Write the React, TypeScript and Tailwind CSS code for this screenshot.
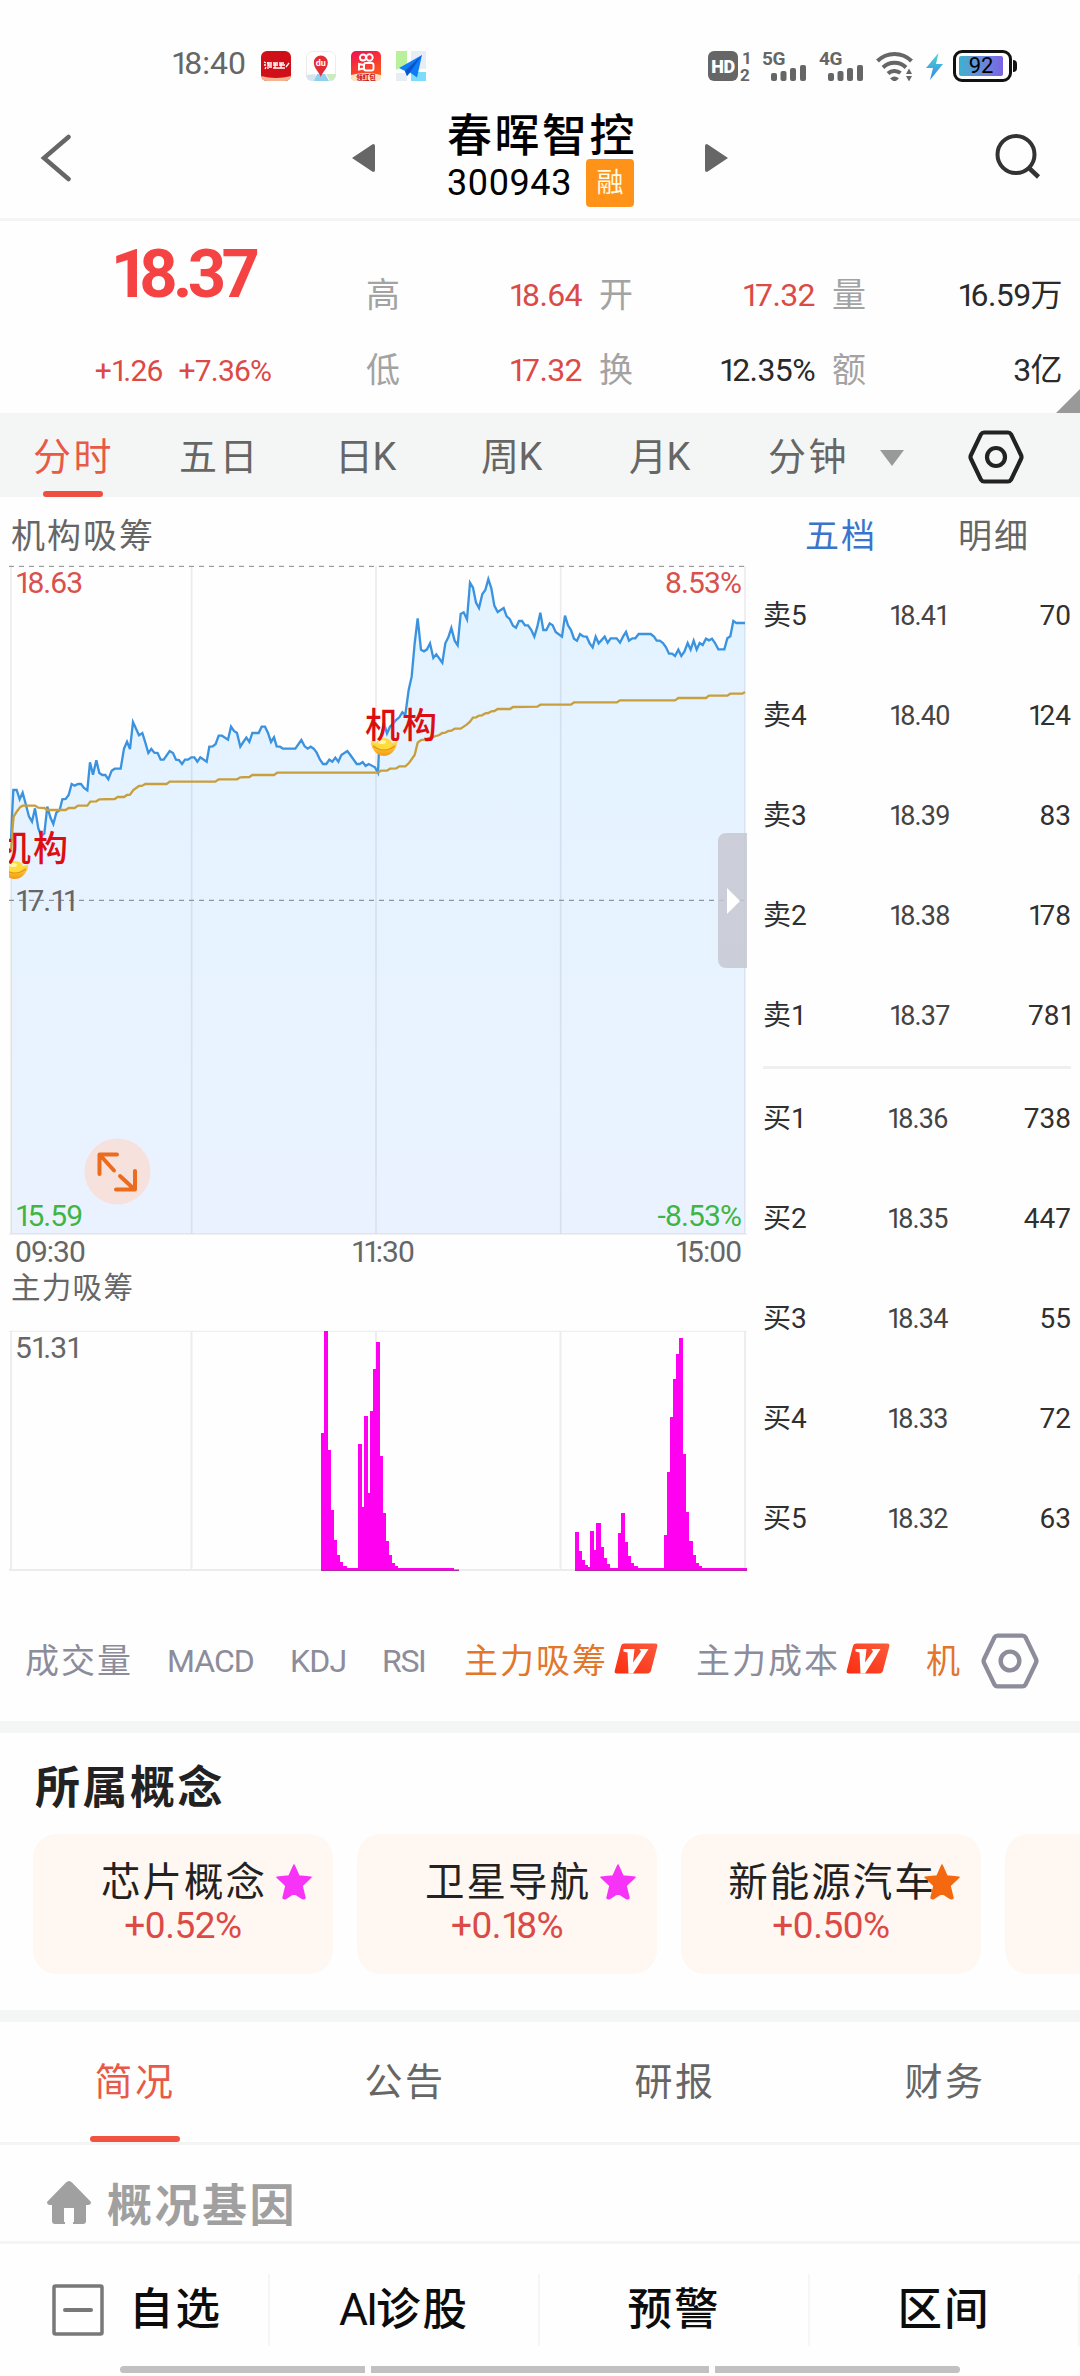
import React from 'react'

/* Digits are set with a narrow "1". */
function Num({ children }: { children: string }) {
  return (
    <>
      {children.split('').map((c, i) =>
        c === '1' ? (
          <span key={i} className="tracking-[-0.15em]">
            1
          </span>
        ) : (
          <React.Fragment key={i}>{c}</React.Fragment>
        ),
      )}
    </>
  )
}

const PRICE =
  '33,870 36,800 40,720 50,720 59,748 68,728 78,765 87,800 96,815 105,775 115,835 124,858 133,850 142,770 151,802 160,822 169,788 179,780 187,748 197,747 206,735 215,702 224,707 234,702 243,702 252,714 262,721 270,637 279,674 289,631 298,669 307,675 316,675 325,688 335,662 344,656 362,656 372,596 381,575 390,597 399,516 417,556 427,549 436,578 445,609 454,597 463,608 473,609 482,629 491,629 509,603 519,609 528,629 537,630 546,642 555,629 564,629 574,622 583,622 592,635 601,622 620,635 628,590 638,589 647,582 656,557 666,557 684,569 693,530 702,543 711,549 721,590 730,576 739,563 748,576 757,549 776,549 785,530 795,530 804,549 813,576 822,562 830,589 840,590 849,596 886,596 904,570 914,589 923,596 932,590 941,596 950,608 960,629 969,642 979,642 988,629 997,635 1006,623 1015,635 1024,615 1042,603 1051,615 1070,642 1079,642 1088,636 1097,648 1106,642 1125,652 1134,668 1137,600 1143,560 1152,520 1161,550 1170,530 1180,520 1188,510 1198,502 1207,487 1216,494 1226,420 1235,380 1244,280 1253,205 1263,299 1272,304 1281,298 1290,280 1300,324 1309,313 1327,338 1336,280 1345,262 1354,234 1364,272 1373,286 1382,192 1391,187 1401,208 1410,98 1419,113 1428,158 1437,174 1447,132 1456,120 1465,87 1474,115 1483,167 1493,186 1511,174 1520,199 1529,207 1539,227 1548,233 1557,213 1566,213 1575,226 1584,226 1594,240 1603,260 1612,230 1621,188 1630,240 1639,240 1649,220 1658,226 1667,246 1686,260 1695,197 1704,226 1713,240 1722,266 1731,272 1740,252 1750,259 1760,260 1769,280 1778,292 1787,260 1796,280 1814,260 1823,278 1832,265 1850,265 1860,278 1869,260 1878,246 1887,272 1897,265 1906,265 1916,252 1952,252 1962,260 1970,272 1979,272 1989,279 1998,292 2007,311 2016,311 2025,318 2035,299 2044,318 2053,305 2063,279 2072,299 2081,272 2090,299 2099,279 2108,285 2118,266 2127,271 2136,266 2145,279 2155,298 2173,298 2182,265 2191,259 2200,213 2209,219 2235,219'

const AVERAGE =
  '33,905 38,830 41,800 50,785 60,772 68,767 105,767 115,773 133,774 142,780 197,780 206,774 224,774 234,767 262,767 271,755 289,754 298,748 344,747 353,741 372,741 381,735 390,734 400,720 417,708 427,707 436,702 500,702 509,695 646,695 656,688 711,688 721,682 748,681 757,675 822,675 832,668 1134,668 1143,662 1161,662 1170,656 1189,655 1198,649 1216,649 1226,640 1244,615 1253,578 1263,570 1272,569 1318,555 1327,549 1336,548 1345,543 1354,542 1364,536 1382,536 1400,524 1410,515 1419,503 1428,502 1437,497 1446,496 1456,490 1465,489 1474,484 1483,483 1493,477 1530,477 1539,471 1612,470 1621,464 1713,464 1722,457 1851,457 1860,451 2025,451 2035,444 2118,444 2127,437 2182,437 2191,431 2227,431 2235,426'

/* [left, right, top] of every volume bar, in pixels */
const BARS: [number, number, number][] = [
  [321, 324, 1432.7], [324, 328, 1330.7], [328, 331, 1450], [331, 334, 1510], [334, 337, 1540],
  [337, 340, 1555], [340, 343, 1562.3], [343, 346.5, 1566], [346.5, 357.5, 1568],
  [357.5, 362, 1444], [362, 363.7, 1506.7], [363.7, 368, 1416], [368, 369.8, 1493],
  [369.8, 373, 1411.3], [373, 375.8, 1369.3], [375.8, 380, 1341.7], [380, 383, 1455.7],
  [383, 386, 1512.7], [386, 389, 1541], [389, 392.2, 1555.3], [392.2, 395.3, 1562.7],
  [395.3, 398.4, 1566], [398.4, 454, 1568.3], [454, 459, 1570],
  [574.8, 579, 1532], [579, 582, 1550.7], [582, 585, 1560], [585, 588, 1565], [588, 590, 1567],
  [590, 594.4, 1531], [594.4, 596, 1550], [596, 600.6, 1523], [600.6, 603.7, 1546.7],
  [603.7, 606.8, 1558], [606.8, 609.9, 1563.7], [609.9, 617.5, 1567.5], [617.5, 621, 1532.7],
  [621, 625, 1513], [625, 628, 1541.7], [628, 631, 1555.7], [631, 634.3, 1562.7],
  [634.3, 637.5, 1566], [637.5, 663.6, 1568.3], [663.6, 666.7, 1534.7], [666.7, 669.8, 1471.7],
  [669.8, 673, 1417], [673, 676, 1378.7], [676, 678.8, 1353.7], [678.8, 683.2, 1338],
  [683.2, 686.3, 1454], [686.3, 689.4, 1512], [689.4, 692.5, 1540.7], [692.5, 695.6, 1555],
  [695.6, 698.7, 1562.7], [698.7, 701.8, 1566], [701.8, 747, 1568.3],
]

function Signal({ label }: { label: string }) {
  return (
    <div className="relative h-[30px] w-[44px] text-[#666]">
      <span className="absolute left-0 top-[-1px] text-[19px] font-bold leading-[17px] tracking-[-0.5px]">{label}</span>
      <svg className="absolute left-[9px] top-[14px]" width="35" height="16" fill="#666">
        <rect x="0" y="8" width="6" height="8" rx="2" />
        <rect x="9.5" y="6" width="6" height="10" rx="2" />
        <rect x="19" y="3" width="6" height="13" rx="2" />
        <rect x="29" y="0" width="6" height="16" rx="2" />
      </svg>
    </div>
  )
}

function StatusBar() {
  return (
    <div className="flex h-[100px] items-start pl-[171px] pt-[51px] text-[#666]">
      <div className="w-[90px] text-[32px] leading-[24px]">
        <Num>18:40</Num>
      </div>
      <svg width="30" height="30" viewBox="0 0 30 30">
        <defs>
          <clipPath id="r1"><rect width="30" height="30" rx="6" /></clipPath>
        </defs>
        <g clipPath="url(#r1)">
          <rect width="30" height="30" fill="#cf1018" />
          <path d="M0 25q15 4 30 0v5H0z" fill="#f3b48f" />
          <path d="M3 11l2 1M3 14h2M4 18l1-2M7 11v7M6 12h5M7 14h4M8 16h3M12 12h5M12 14h5M12 17h6M14 12v5M18 12h5M18 14h6M18 17h6M20 12v5M25 16l3-4" stroke="#fff" strokeWidth="1.3" fill="none" />
        </g>
      </svg>
      <svg className="ml-[15px]" width="30" height="30" viewBox="0 0 30 30">
        <defs>
          <clipPath id="r2"><rect width="30" height="30" rx="6" /></clipPath>
        </defs>
        <rect x=".5" y=".5" width="29" height="29" rx="6" fill="#fff" stroke="#ececec" />
        <g clipPath="url(#r2)">
          <path d="M0 24l9-1 3 7H0z" fill="#d3e6ee" />
          <path d="M11 23h8l4 7H8z" fill="#8fd0ee" />
          <path d="M20 23h10v7h-6z" fill="#cdebc3" />
        </g>
        <path d="M14.8 26c-.8-4-7-8.500-7-14.500a7 7 0 0114 0c0 6-6.200 10.500-7 14.500z" fill="#e32b35" />
        <text x="14.800" y="15" fontSize="9" fontWeight="700" fill="#fff" textAnchor="middle">du</text>
      </svg>
      <svg className="ml-[15px]" width="30" height="30" viewBox="0 0 30 30">
        <defs>
          <linearGradient id="ks" x1="0" y1="0" x2=".4" y2="1">
            <stop offset="0" stopColor="#f00f52" />
            <stop offset="1" stopColor="#fd5a1c" />
          </linearGradient>
        </defs>
        <rect width="30" height="30" rx="5" fill="url(#ks)" />
        <path d="M0 24q15-4 30 0v2q0 4-4 4H4q-4 0-4-4z" fill="#fbe6c4" />
        <g fill="none" stroke="#fff" strokeWidth="1.900">
          <circle cx="12" cy="6.500" r="3" />
          <circle cx="18.500" cy="6.500" r="3.200" />
          <rect x="13" y="12" width="9.500" height="7.500" rx="2" />
          <path d="M12.500 14L8 13v5.500l4.500-1" />
        </g>
        <text x="15" y="29" fontSize="6.500" fontWeight="900" fill="#d0201c" textAnchor="middle" className="font-['Noto_Sans_CJK_SC',sans-serif]">领红包</text>
      </svg>
      <svg className="ml-[15px]" width="30" height="30" viewBox="0 0 30 30">
        <rect width="30" height="30" fill="#fff" />
        <path d="M0 0h11v13L0 19z" fill="#b9f09b" />
        <path d="M15 0h15v18H15zM0 22h11v8H0z" fill="#e6edf3" />
        <path d="M15 21h15v9H15z" fill="#7edcfb" />
        <path d="M26 4L3 17l6 3 2 5 3-3.500 7 5z" fill="#0f7df8" />
        <path d="M26 4L9 20l2 5 3-3.500z" fill="#0a55c9" />
      </svg>
      <div className="ml-[282px] flex items-start">
        <div className="flex h-[30px] w-[30px] items-center justify-center rounded-[6px] bg-[#666] text-[18px] font-black tracking-[-0.5px] text-white">HD</div>
        <div className="ml-[2px] flex w-[22px] flex-col text-[17px] font-bold leading-[16px]">
          <span className="-mt-[1px] pl-[2px]">1</span>
          <span className="mt-[1px]">2</span>
        </div>
        <Signal label="5G" />
        <div className="w-[13px]" />
        <Signal label="4G" />
        <svg className="ml-[13px]" width="37" height="30" viewBox="0 0 37 30">
          <g fill="none" stroke="#666" strokeWidth="4">
            <path d="M1.500 10a24 24 0 0134 0" />
            <path d="M7 16.500a16.500 16.500 0 0123 0" />
            <path d="M12 22.500a9.500 9.500 0 0112.500-.5" />
          </g>
          <path d="M14 27.500q4.500-4 9 0L18.500 31z" fill="#666" />
          <path d="M30 23l3-5.500 3 5.500zM30 25h6l-3 5.500z" fill="#666" />
        </svg>
        <svg className="ml-[13px] mt-[2px]" width="17" height="27" viewBox="0 0 17 27">
          <defs>
            <linearGradient id="bolt" x1="0" y1="0" x2="0" y2="1">
              <stop offset="0" stopColor="#55d6cf" />
              <stop offset="1" stopColor="#2f86ea" />
            </linearGradient>
          </defs>
          <path d="M12.500 0L0 15h7L4 27l13-16H10z" fill="url(#bolt)" />
        </svg>
        <div className="-mt-[1px] ml-[10px] flex items-center">
          <div className="h-[32px] w-[59px] rounded-[9px] border-[3px] border-[#111] p-[3px]">
            <div className="flex h-[20px] w-[44px] items-center justify-center rounded-[2px] bg-gradient-to-r from-[#3bb0cd] to-[#7a62e3] text-[22px] leading-none text-black">92</div>
          </div>
          <div className="ml-px h-[12px] w-[4px] rounded-r-[4px] bg-[#111]" />
        </div>
      </div>
    </div>
  )
}

function Header() {
  return (
    <div className="flex h-[118px] items-start">
      <svg className="ml-[40px] mt-[34px]" width="32" height="48" fill="none" stroke="#666" strokeWidth="4.500" strokeLinecap="round">
        <path d="M28.500 3L4 24l24.500 21" />
      </svg>
      <svg className="ml-[280px] mt-[43px]" width="23" height="30">
        <path d="M0 15L21 1q2 0 2 2v24q0 2-2 2z" fill="#666" />
      </svg>
      <div className="ml-[72px] flex w-[200px] flex-col">
        <div className="mt-[13px] h-[46px] whitespace-nowrap text-[45px] font-medium leading-[47px] tracking-[2.5px] text-black">春晖智控</div>
        <div className="flex items-center text-black">
          <span className="w-[139px] text-[36px] leading-[44px] tracking-[0.6px]">300943</span>
          <span className="h-[48px] w-[48px] rounded-[4px] bg-[#ff931a] text-center text-[27px] leading-[48px] text-[#fffbe6]">融</span>
        </div>
      </div>
      <svg className="ml-[58px] mt-[43px]" width="23" height="30">
        <path d="M23 15L2 1Q0 1 0 3v24q0 2 2 2z" fill="#666" />
      </svg>
      <svg className="ml-[265px] mt-[31px]" width="50" height="50" fill="none" stroke="#333" strokeWidth="4">
        <circle cx="23" cy="23.500" r="18.500" />
        <path d="M36 37l9.500 9" strokeWidth="4.500" />
      </svg>
    </div>
  )
}

const STATS = [
  [['高', '18.64', 1], ['开', '17.32', 1], ['量', '16.59万', 0]],
  [['低', '17.32', 1], ['换', '12.35%', 0], ['额', '3亿', 0]],
] as const

function Quote() {
  return (
    <div className="relative flex h-[192px]">
      <div className="flex w-[366px] flex-col items-center">
        <div className="mt-[17px] h-[72px] text-[67px] font-bold leading-[72px] tracking-[-0.07em] text-[#f54343]">
          <Num>18.37</Num>
        </div>
        <div className="mt-[46px] flex gap-[16px] text-[30px] leading-[30px] tracking-[-0.8px] text-[#dc4a46]">
          <span><Num>+1.26</Num></span>
          <span><Num>+7.36%</Num></span>
        </div>
      </div>
      <div className="flex flex-1 flex-col pt-[53px]">
        {STATS.map((row, r) => (
          <div key={r} className="grid h-[75px] shrink-0 grid-cols-[233px_233px_248px] items-start leading-[42px]">
            {row.map(([label, value, up], i) => (
              <div key={label} className={i === 2 ? 'flex justify-between pr-[18px]' : 'flex justify-between pr-[17px]'}>
                <span className="text-[34px] text-[#a3a3a3]">{label}</span>
                <span className={up ? 'text-[32px] tracking-[-0.6px] text-[#dc4a46]' : 'text-[32px] tracking-[-0.6px] text-[#2a2a2a]'}>
                  <Num>{value}</Num>
                </span>
              </div>
            ))}
          </div>
        ))}
      </div>
      <svg className="absolute bottom-0 right-0" width="24" height="24">
        <path d="M24 0v24H0z" fill="#999" />
      </svg>
    </div>
  )
}

function Hex({ color, size }: { color: string; size: number }) {
  return (
    <svg width={size} height={size} viewBox="0 0 56 56" fill="none" stroke={color} strokeWidth="4.200" strokeLinejoin="round">
      <path d="M16 3.500h24q2 0 3 1.700L53 26q1 2 0 4L43 50.800q-1 1.700-3 1.700H16q-2 0-3-1.700L3 30q-1-2 0-4L13 5.200q1-1.700 3-1.700z" />
      <circle cx="28" cy="28" r="9" />
    </svg>
  )
}

function PeriodTabs() {
  return (
    <div className="flex h-[84px] items-start bg-[#f4f6f6] text-[38px] leading-[88px] tracking-[2.500px] text-[#666]">
      <div className="relative h-[84px] w-[147px] pl-[33px] text-[#e85a48]">
        分时
        <div className="absolute bottom-0 left-[43px] h-[6px] w-[60px] rounded-[3px] bg-[#ee4f40]" />
      </div>
      <div className="w-[155px] pl-[32px]">五日</div>
      <div className="w-[148px] pl-[33px]">日<span className="-ml-[3px]">K</span></div>
      <div className="w-[148px] pl-[31px]">周<span className="-ml-[3px]">K</span></div>
      <div className="w-[140px] pl-[31px]">月<span className="-ml-[3px]">K</span></div>
      <div className="w-[142px] pl-[30px]">分钟</div>
      <svg className="mt-[37px]" width="24" height="16">
        <path d="M0 0h24L12 16z" fill="#999" />
      </svg>
      <div className="ml-[64px] mt-[16px]">
        <Hex color="#222" size={56} />
      </div>
    </div>
  )
}

function Ingot() {
  return (
    <svg width="28" height="20" viewBox="0 0 28 20">
      <defs>
        <linearGradient id="gold" x1="0" y1="0" x2="0" y2="1">
          <stop offset="0" stopColor="#ffe35a" />
          <stop offset="1" stopColor="#f39a12" />
        </linearGradient>
      </defs>
      <path d="M1 4q-1 3 2 8 4 7 11 7t11-7q3-5 2-8-5 3-13 3T1 4z" fill="url(#gold)" />
      <ellipse cx="14" cy="7" rx="8" ry="6" fill="#ffdc3c" />
      <path d="M3 9q11 8 22 0" stroke="#e8930c" strokeWidth="1.200" fill="none" />
      <ellipse cx="12" cy="5" rx="4" ry="2" fill="#fff4a8" />
    </svg>
  )
}

function Marker() {
  return (
    <div className="relative h-[52px] w-[74px]">
      <div className="absolute left-[5px] top-[29px]"><Ingot /></div>
      <div className="absolute left-0 top-[1px] whitespace-nowrap text-[35px] font-medium leading-[36px] tracking-[2px] text-[#dd0e12]">机构</div>
    </div>
  )
}

/* Chart drawings use three units per pixel; the box starts at (9, 565). */
function MainChart() {
  return (
    <div className="relative h-[671px] w-[738px] overflow-hidden text-[30px] leading-[30px] tracking-[-0.9px]">
      <svg className="block" width="738" height="671" viewBox="27 45 2214 2013" fill="none">
        <defs>
          <linearGradient id="area" x1="0" y1="87" x2="0" y2="2052" gradientUnits="userSpaceOnUse">
            <stop offset="0" stopColor="#e3f3ff" />
            <stop offset="1" stopColor="#ebf2ff" />
          </linearGradient>
        </defs>
        <polygon points={`33,2052 ${PRICE} 2235,2052`} fill="url(#area)" />
        <g stroke="#000" strokeOpacity=".075" strokeWidth="5">
          <path d="M33 49V2052M575 49V2052M1128 49V2052M1682 49V2052M2235 49V2052M27 2052H2241" />
        </g>
        <path d="M27 49H2241" stroke="#888" strokeWidth="3" strokeDasharray="15 15" />
        <path d="M27 1051H2241" stroke="#8d96a0" strokeWidth="4" strokeDasharray="15 15" />
        <polyline points={PRICE} stroke="#3b93e0" strokeWidth="7" />
        <polyline points={AVERAGE} stroke="#c79f3c" strokeWidth="7" />
      </svg>
      <div className="absolute left-[356px] top-[143px]"><Marker /></div>
      <div className="absolute left-[-13px] top-[266px]"><Marker /></div>
      <div className="absolute left-[6px] top-[3px] text-[#d9504c]"><Num>18.63</Num></div>
      <div className="absolute right-[6px] top-[3px] text-[#d9504c]"><Num>8.53%</Num></div>
      <div className="absolute left-[6px] top-[321px] text-[#666]"><Num>17.11</Num></div>
      <div className="absolute bottom-[5px] left-[6px] text-[#3fb544]"><Num>15.59</Num></div>
      <div className="absolute bottom-[5px] right-[6px] text-[#3fb544]"><Num>-8.53%</Num></div>
      <svg className="absolute left-[75px] top-[573px]" width="67" height="67" fill="none" stroke="#ec6c1f" strokeWidth="4" strokeLinecap="round" strokeLinejoin="round">
        <circle cx="33.500" cy="33.500" r="33" fill="#f7e1dd" stroke="none" />
        <path d="M33 16.500H15.500V36M16 17l14 15.500M51 33v18.500H32M50 51L36 38" />
      </svg>
      <div className="absolute right-0 top-[268px] flex h-[135px] w-[29px] items-center rounded-l-[8px] bg-[#c6c8d1]/85 pl-[9px]">
        <svg width="13" height="26"><path d="M0 0l13 13L0 26z" fill="#fff" /></svg>
      </div>
    </div>
  )
}

function SubChart() {
  return (
    <div className="relative mt-[21px] h-[244px] w-[738px] text-[30px] leading-[30px] tracking-[-0.9px] text-[#666]">
      <svg className="block" width="738" height="244" viewBox="9 1329 738 244" fill="none">
        <path d="M11 1331V1570M191.500 1331V1570M376 1331V1570M560.500 1331V1570M745 1331V1570M9 1570H747" stroke="#ececec" strokeWidth="1.800" />
        <path d="M9 1331.300H747" stroke="#ececec" />
        <g shapeRendering="crispEdges">
          {BARS.map(([l, r, t], i) => (
            <rect key={i} x={l} y={t} width={r - l} height={1571 - t} fill="#ff00f0" />
          ))}
        </g>
        <path d="M321 1570.300H459M575 1570.300H747" stroke="#b02aa4" strokeWidth="1.600" />
      </svg>
      <div className="absolute left-[6px] top-[4px]"><Num>51.31</Num></div>
    </div>
  )
}

const SELL = [['卖5', '18.41', '70'], ['卖4', '18.40', '124'], ['卖3', '18.39', '83'], ['卖2', '18.38', '178'], ['卖1', '18.37', '781']]
const BUY = [['买1', '18.36', '738'], ['买2', '18.35', '447'], ['买3', '18.34', '55'], ['买4', '18.33', '72'], ['买5', '18.32', '63']]

function Level({ row, shift }: { row: string[]; shift: string }) {
  return (
    <div className="grid h-[100px] grid-cols-[124px_100px_1fr] items-center text-[28px] leading-none text-[#303030]">
      <span><Num>{row[0]}</Num></span>
      <span className={shift}><Num>{row[1]}</Num></span>
      <span className="text-right"><Num>{row[2]}</Num></span>
    </div>
  )
}

function OrderBook() {
  return (
    <div className="ml-[16px] flex w-[308px] flex-col">
      <div className="flex h-[69px] pl-[42px] text-[34px] leading-[78px] tracking-[2px] text-[#666]">
        <span className="w-[153px] text-[#3a74cc]">五档</span>
        <span>明细</span>
      </div>
      {SELL.map((r) => <Level key={r[0]} row={r} shift="text-[27px] tracking-[-0.8px] text-[#444] pl-[2px]" />)}
      <div className="h-[3px] bg-[#efefef]" />
      {BUY.map((r) => <Level key={r[0]} row={r} shift="text-[27px] tracking-[-0.8px] text-[#444]" />)}
    </div>
  )
}

function VBadge() {
  return (
    <svg className="ml-[6px] mt-[2px]" width="44" height="31" viewBox="0 0 44 31">
      <defs>
        <linearGradient id="vb" x1="0" y1="1" x2="1" y2="0">
          <stop offset="0" stopColor="#fb2d10" />
          <stop offset="1" stopColor="#fb5a3c" />
        </linearGradient>
      </defs>
      <path d="M10 .5h31q3 0 2.300 3L37 27.500q-.8 3-4 3H3q-3 0-2.200-3L7 3Q7.500.5 10 .5z" fill="url(#vb)" />
      <path d="M9.500 6H20.500L19 19.500 27 8.500 25.500 6H34.500L19 30.500H14.500L13.500 9.500 9.500 8.500z" fill="#fff" />
    </svg>
  )
}

function Indicators() {
  return (
    <div className="flex h-[120px] items-center pl-[25px] text-[34px] leading-[40px] text-[#8c8c9a]">
      <div className="w-[142px] tracking-[2px]">成交量</div>
      <div className="w-[123px] text-[32px] tracking-[-1px]">MACD</div>
      <div className="w-[92px] text-[32px] tracking-[-0.800px]">KDJ</div>
      <div className="w-[82px] text-[32px] tracking-[-1.300px]">RSI</div>
      <div className="flex w-[232px] tracking-[2px] text-[#e2762b]">主力吸筹<VBadge /></div>
      <div className="flex w-[230px] tracking-[2px]">主力成本<VBadge /></div>
      <div className="w-[55px] text-[#e2762b]">机</div>
      <Hex color="#8c8c9a" size={58} />
    </div>
  )
}

const CONCEPTS = [
  ['芯片概念', '+0.52%', '#f733f7'],
  ['卫星导航', '+0.18%', '#f733f7'],
  ['新能源汽车', '+0.50%', '#f4690f'],
]

function Concepts() {
  return (
    <div className="h-[277px] overflow-hidden">
      <div className="mt-[31px] pl-[35px] text-[45px] font-bold leading-[50px] tracking-[2.500px] text-[#222]">所属概念</div>
      <div className="mt-[20px] flex gap-[24px] pl-[33px]">
        {CONCEPTS.map(([name, pct, star]) => (
          <div key={name} className="relative flex h-[140px] w-[300px] shrink-0 flex-col items-center rounded-[24px] bg-[#fff7f1]">
            <div className="mt-[28px] whitespace-nowrap pl-[2px] text-[39.500px] leading-[42px] tracking-[2px] text-[#222]">{name}</div>
            <div className="mt-[3px] text-[37px] leading-[37px] tracking-[-0.500px] text-[#dc4a46]"><Num>{pct}</Num></div>
            <svg className="absolute left-[242px] top-[29px]" width="38" height="38" viewBox="0 0 38 38">
              <path d="M19 2l5 11 12 1.300-9 8.300 3 12.400q-1 1-2.500.5L19 30l-8.500 5.500Q9 36 8 35l3-12.400L2 14.300 14 13z" fill={star} stroke={star} strokeWidth="1.500" strokeLinejoin="round" />
            </svg>
          </div>
        ))}
        <div className="h-[140px] w-[300px] shrink-0 rounded-[24px] bg-[#fff7f1]" />
      </div>
    </div>
  )
}

function InfoTabs() {
  return (
    <div className="grid h-[123px] grid-cols-4 border-b-[3px] border-[#f3f5f5] text-center text-[38px] leading-[120px] tracking-[2.500px] text-[#666]">
      <div className="relative text-[#e85a48]">
        简况
        <div className="absolute bottom-0 left-[90px] h-[6px] w-[90px] rounded-[3px] bg-[#f05341]" />
      </div>
      <div>公告</div>
      <div>研报</div>
      <div>财务</div>
    </div>
  )
}

function BottomBar() {
  return (
    <div className="flex h-[132px] flex-col bg-[#fefefe]">
      <div className="mt-[30px] grid h-[72px] grid-cols-4 items-center text-center text-[44.500px] font-medium leading-[72px] tracking-[2px] text-[#0c0c0c]">
        <div className="flex items-center border-r-2 border-[#f6f6f6] pl-[52px]">
          <svg className="mr-[25px]" width="52" height="52" fill="none" stroke="#787878" strokeWidth="3.500">
            <rect x="2" y="2" width="48" height="48" rx="1.500" />
            <path d="M13 26h26" strokeWidth="4" strokeLinecap="round" />
          </svg>
          自选
        </div>
        <div className="border-r-2 border-[#f6f6f6]"><span className="font-normal tracking-[-2px]">AI</span>诊股</div>
        <div className="border-r-2 border-[#f6f6f6]">预警</div>
        <div className="border-r-2 border-[#f6f6f6]">区间</div>
      </div>
      <div className="mt-[20px] flex justify-center gap-[6px]">
        <div className="h-[7px] w-[245px] rounded-l-full bg-[#c1c1c1]" />
        <div className="h-[7px] w-[338px] bg-[#c1c1c1]" />
        <div className="h-[7px] w-[245px] rounded-r-full bg-[#c1c1c1]" />
      </div>
    </div>
  )
}

export default function App() {
  return (
    <div className="h-[2376px] w-[1080px] overflow-hidden bg-[#fefefe] font-['Roboto','Noto_Sans_CJK_SC',sans-serif]">
      <StatusBar />
      <Header />
      <div className="h-[3px] bg-[#f4f4f4]" />
      <Quote />
      <PeriodTabs />
      <div className="flex h-[1104px]">
        <div className="w-[747px] pl-[9px]">
          <div className="h-[68px] pl-[2px] text-[34px] leading-[79px] tracking-[2px] text-[#666]">机构吸筹</div>
          <MainChart />
          <div className="flex h-[32px] justify-between pl-[6px] pr-[6px] text-[30px] leading-[31px] tracking-[-1px] text-[#666]">
            <span className="w-[73px]"><Num>09:30</Num></span>
            <span className="pl-[2px]"><Num>11:30</Num></span>
            <span><Num>15:00</Num></span>
          </div>
          <div className="h-[40px] pl-[2px] text-[29.500px] leading-[40px] tracking-[1.300px] text-[#666]">主力吸筹</div>
          <SubChart />
        </div>
        <OrderBook />
      </div>
      <Indicators />
      <div className="h-[12px] bg-[#f4f6f6]" />
      <Concepts />
      <div className="h-[12px] bg-[#f4f6f6]" />
      <InfoTabs />
      <div className="flex h-[99px] items-start border-b-[3px] border-[#f3f5f5] pl-[47px] pt-[36px]">
        <svg width="44" height="43" fill="#a0a0a0">
          <path d="M22 0q1.500 0 3 1.500L44 21q0 3-3 3h-2v16q0 3-3 3H26V28h-8v15H8q-3 0-3-3V24H3q-3 0-3-3L19 1.500Q20.500 0 22 0z" />
          <path d="M17 27h10v14H17z" fill="#fefefe" />
        </svg>
        <span className="ml-[16px] mt-[3px] text-[45px] font-bold leading-[46px] tracking-[2.500px] text-[#a0a0a0]">概况基因</span>
      </div>
      <BottomBar />
    </div>
  )
}
